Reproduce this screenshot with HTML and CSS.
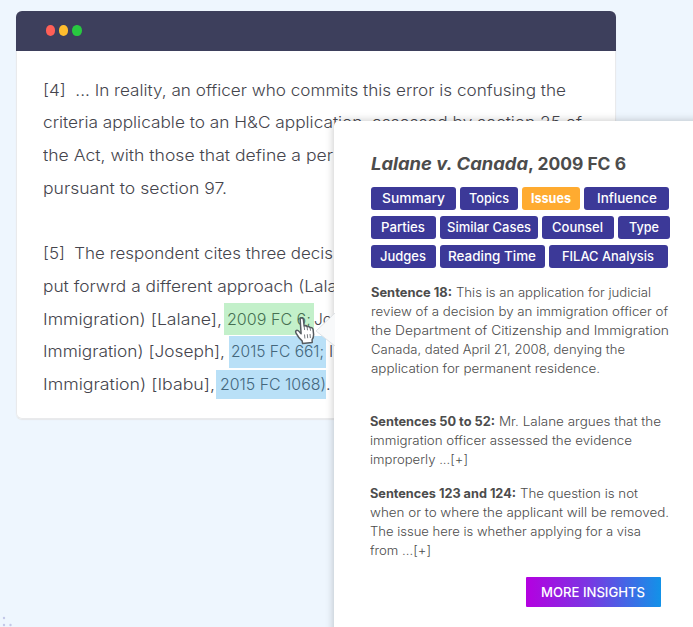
FILE: index.html
```
<!DOCTYPE html>
<html lang="en">
<head>
<meta charset="utf-8">
<title>Case insights</title>
<link rel="stylesheet" href="styles.css">
</head>
<body>
<main class="stage">
  <section class="window">
    <header class="titlebar"><i class="dot red"></i><i class="dot amber"></i><i class="dot green"></i></header>
    <div class="document">
      <p class="para">
        <span class="line"><span data-w="523">[4]&nbsp; ... In reality, an officer who commits this error is confusing the</span></span>
        <span class="line"><span data-w="539">criteria applicable to an H&amp;C application, assessed by section 25 of</span></span>
        <span class="line"><span data-w="290">the Act, with those that define a per</span></span>
        <span class="line"><span data-w="184">pursuant to section 97.</span></span>
      </p>
      <p class="para">
        <span class="line"><span data-w="290">[5]&nbsp; The respondent cites three decis</span></span>
        <span class="line"><span data-w="294">put forwrd a different approach (Lala</span></span>
        <span class="line"><span class="lead-a" data-w="179">Immigration) [Lalane],</span><mark class="cite current"><span data-w="84">2009 FC 6;</span></mark><span data-w="18">Jo</span></span>
        <span class="line"><span class="lead-b" data-w="182">Immigration) [Joseph],</span><mark class="cite first"><span data-w="93">2015 FC 661;</span></mark><span class="after">I</span></span>
        <span class="line"><span class="lead-c" data-w="172">Immigration) [Ibabu],</span><mark class="cite second"><span data-w="106">2015 FC 1068)</span></mark><span>.</span></span>
      </p>
    </div>
  </section>

  <svg class="pattern" width="14" height="14" viewBox="0 0 14 14"><g fill="#c3c8e8"><circle cx="4" cy="5" r="1.2"/><circle cx="4" cy="12" r="1.2"/><circle cx="10.5" cy="12" r="1.2"/></g></svg>

  <aside class="panel">
    <h1 class="title"><em data-w="157">Lalane v. Canada</em><span data-w="98">, 2009 FC 6</span></h1>
    <nav class="tags">
      <div class="row">
        <a class="tag w85"><span data-w="63">Summary</span></a>
        <a class="tag w58"><span data-w="40">Topics</span></a>
        <a class="tag w58 active"><span data-w="40">Issues</span></a>
        <a class="tag w85"><span data-w="60">Influence</span></a>
      </div>
      <div class="row">
        <a class="tag w64"><span data-w="44">Parties</span></a>
        <a class="tag w98"><span data-w="84">Similar Cases</span></a>
        <a class="tag w72"><span data-w="51">Counsel</span></a>
        <a class="tag w52"><span data-w="30">Type</span></a>
      </div>
      <div class="row">
        <a class="tag w64"><span data-w="46">Judges</span></a>
        <a class="tag w105"><span data-w="88">Reading Time</span></a>
        <a class="tag w119"><span data-w="92">FILAC Analysis</span></a>
      </div>
    </nav>
    <p class="note summary">
      <span class="line"><b data-w="81">Sentence 18:</b><span data-w="195">This is an application for judicial</span></span>
      <span class="line"><span data-w="297">review of a decision by an immigration officer of</span></span>
      <span class="line"><span data-w="298">the Department of Citizenship and Immigration</span></span>
      <span class="line"><span data-w="254">Canada, dated April 21, 2008, denying the</span></span>
      <span class="line"><span data-w="229">application for permanent residence.</span></span>
    </p>
    <p class="note">
      <span class="line"><b data-w="125">Sentences 50 to 52:</b><span data-w="162">Mr. Lalane argues that the</span></span>
      <span class="line"><span data-w="262">immigration officer assessed the evidence</span></span>
      <span class="line"><span data-w="98">improperly ...[+]</span></span>
    </p>
    <p class="note">
      <span class="line"><b data-w="146">Sentences 123 and 124:</b><span data-w="118">The question is not</span></span>
      <span class="line"><span data-w="299">when or to where the applicant will be removed.</span></span>
      <span class="line"><span data-w="271">The issue here is whether applying for a visa</span></span>
      <span class="line"><span data-w="61">from ...[+]</span></span>
    </p>
    <button class="more"><span data-w="104">MORE INSIGHTS</span></button>
  </aside>

  <svg class="tail" width="20" height="38" viewBox="0 0 20 38"><path d="M20 1 1 19 20 34Z" fill="#f8f9fa"/><path d="M20 1 1 19 20 34" fill="none" stroke="#dfe2e5"/></svg>
  <svg class="hand" width="22" height="28" viewBox="0 0 22 28"><path d="M6.2 3.2Q6 1.2 7.6 1.1Q9.3 1 9.5 3.2L10.1 9Q12.2 8 13.1 9.7Q15.2 8.9 16.1 10.7Q18.6 10.1 19.1 12.7L19.6 17.5Q19.7 20.5 18.1 22.6L18.2 25.6L8.6 26.5L8.1 23.8Q4.4 20.8 2.2 16.4Q1 14.2 2.4 13.5Q4 12.8 6.1 15.6L7.1 16.6Z" fill="#fff" stroke="#555b60" stroke-width="1.5" stroke-linejoin="round"/><path d="M10.1 9l.5 4M13.1 9.7l.4 3.6M16.1 10.7l.4 3M10.5 17.5l.4 4M13.3 17.2l.4 4M16 17l.4 4" fill="none" stroke="#777c80"/></svg>
</main>
<script src="script.js"></script>
</body>
</html>
```
FILE: styles.css
```
* { box-sizing: border-box; }
body {
  margin: 0;
  background: #eef6fe;
  font-family: Inter, "Open Sans", sans-serif;
}
.stage {
  position: relative;
  width: 693px;
  height: 627px;
  padding: 10.5px 0 0 16px;
  overflow: hidden;
}
.window {
  width: 599.5px;
  height: 408px;
  border-radius: 6px;
  background: #fff;
  box-shadow: inset 0 0 0 1px #e9eaec, 0 1px 1px #e6e8ea;
}
.titlebar {
  display: flex;
  align-items: center;
  gap: 4px;
  height: 40px;
  padding-left: 29.7px;
  border-radius: 6px 6px 0 0;
  background: #3d3f5c;
}
.dot { width: 9.3px; height: 10.3px; border-radius: 50%; }
.red { background: #ff5f57; }
.amber { background: #ffbd2e; }
.green { background: #28c940; }
.document {
  padding: 23.2px 0 0 27px;
  color: #45454d;
  font-size: 16px;
  font-weight: 300;
  line-height: 32.7px;
}
.para { margin: 0 0 32.7px; }
.line { display: flex; white-space: pre; }
[data-w] { display: inline-block; flex: none; white-space: pre; transform-origin: 0 50%; }
.cite { display: block; color: #44677d; }
.current { width: 90.5px; margin-left: 1.5px; padding-left: 3px; background: #c3f0ca; color: #467052; }
.first { width: 97px; height: 32px; margin: .7px 0 0 4px; padding-left: 2px; background: #b9e0f7; line-height: 31.3px; }
.second { width: 110px; height: 28.5px; margin: 2px 0 0 1px; padding-left: 4px; background: #b9e0f7; line-height: 28.7px; }
.after { margin-left: 3px; }
.pattern { position: absolute; left: 0; top: 613px; }

.panel {
  position: absolute;
  left: 333.5px;
  top: 120.5px;
  width: 380px;
  height: 530px;
  padding: 30px 0 0 37.5px;
  border-radius: 5px 0 0 0;
  background: #fff;
  color: #4c4c4c;
  box-shadow: 0 0 9px rgba(0, 0, 0, .24);
}
.title {
  display: flex;
  height: 36.5px;
  margin: 0;
  font-size: 17px;
  font-weight: 700;
  line-height: 27px;
}
.tags { display: flex; flex-direction: column; gap: 5.8px; }
.row { display: flex; gap: 4px; }
.tag {
  display: flex;
  justify-content: center;
  height: 23.3px;
  border-radius: 3px;
  background: #3c3998;
  color: #fff;
  font-size: 13px;
  font-weight: 500;
  line-height: 23px;
}
.active { background: #ffab30; font-weight: 700; }
.w52 { width: 52px; }
.w58 { width: 58px; }
.w64 { width: 64.5px; }
.w72 { width: 72px; }
.w85 { width: 85px; }
.w98 { width: 98px; }
.w105 { width: 105px; }
.w119 { width: 119px; }
.note {
  margin: 0 0 15.5px -.8px;
  font-size: 12.8px;
  font-weight: 300;
  line-height: 18.8px;
}
.note .line { gap: 3.5px; }
.note b { font-weight: 700; }
.summary { margin: 15.9px 0 35px 0; }
.more {
  display: flex;
  align-items: center;
  justify-content: center;
  width: 134.5px;
  height: 30px;
  margin: 16.5px 0 0 155px;
  padding: 0;
  border: 0;
  border-radius: 1px;
  background: linear-gradient(90deg, #b400e0, #7c35e2 45%, #1292e8);
  color: #fff;
  font: 500 13.5px Inter, sans-serif;
}
.more span { text-align: left; }
.tail { position: absolute; left: 315px; top: 312px; }
.hand { position: absolute; left: 294px; top: 317px; }
```
FILE: script.js
```
// Widen each text run so that it fills its measure.
document.querySelectorAll('[data-w]').forEach(function (el) {
  var target = parseFloat(el.dataset.w);
  var natural = el.getBoundingClientRect().width;
  el.style.width = target + 'px';
  el.style.transform = 'scaleX(' + target / natural + ')';
});
```
